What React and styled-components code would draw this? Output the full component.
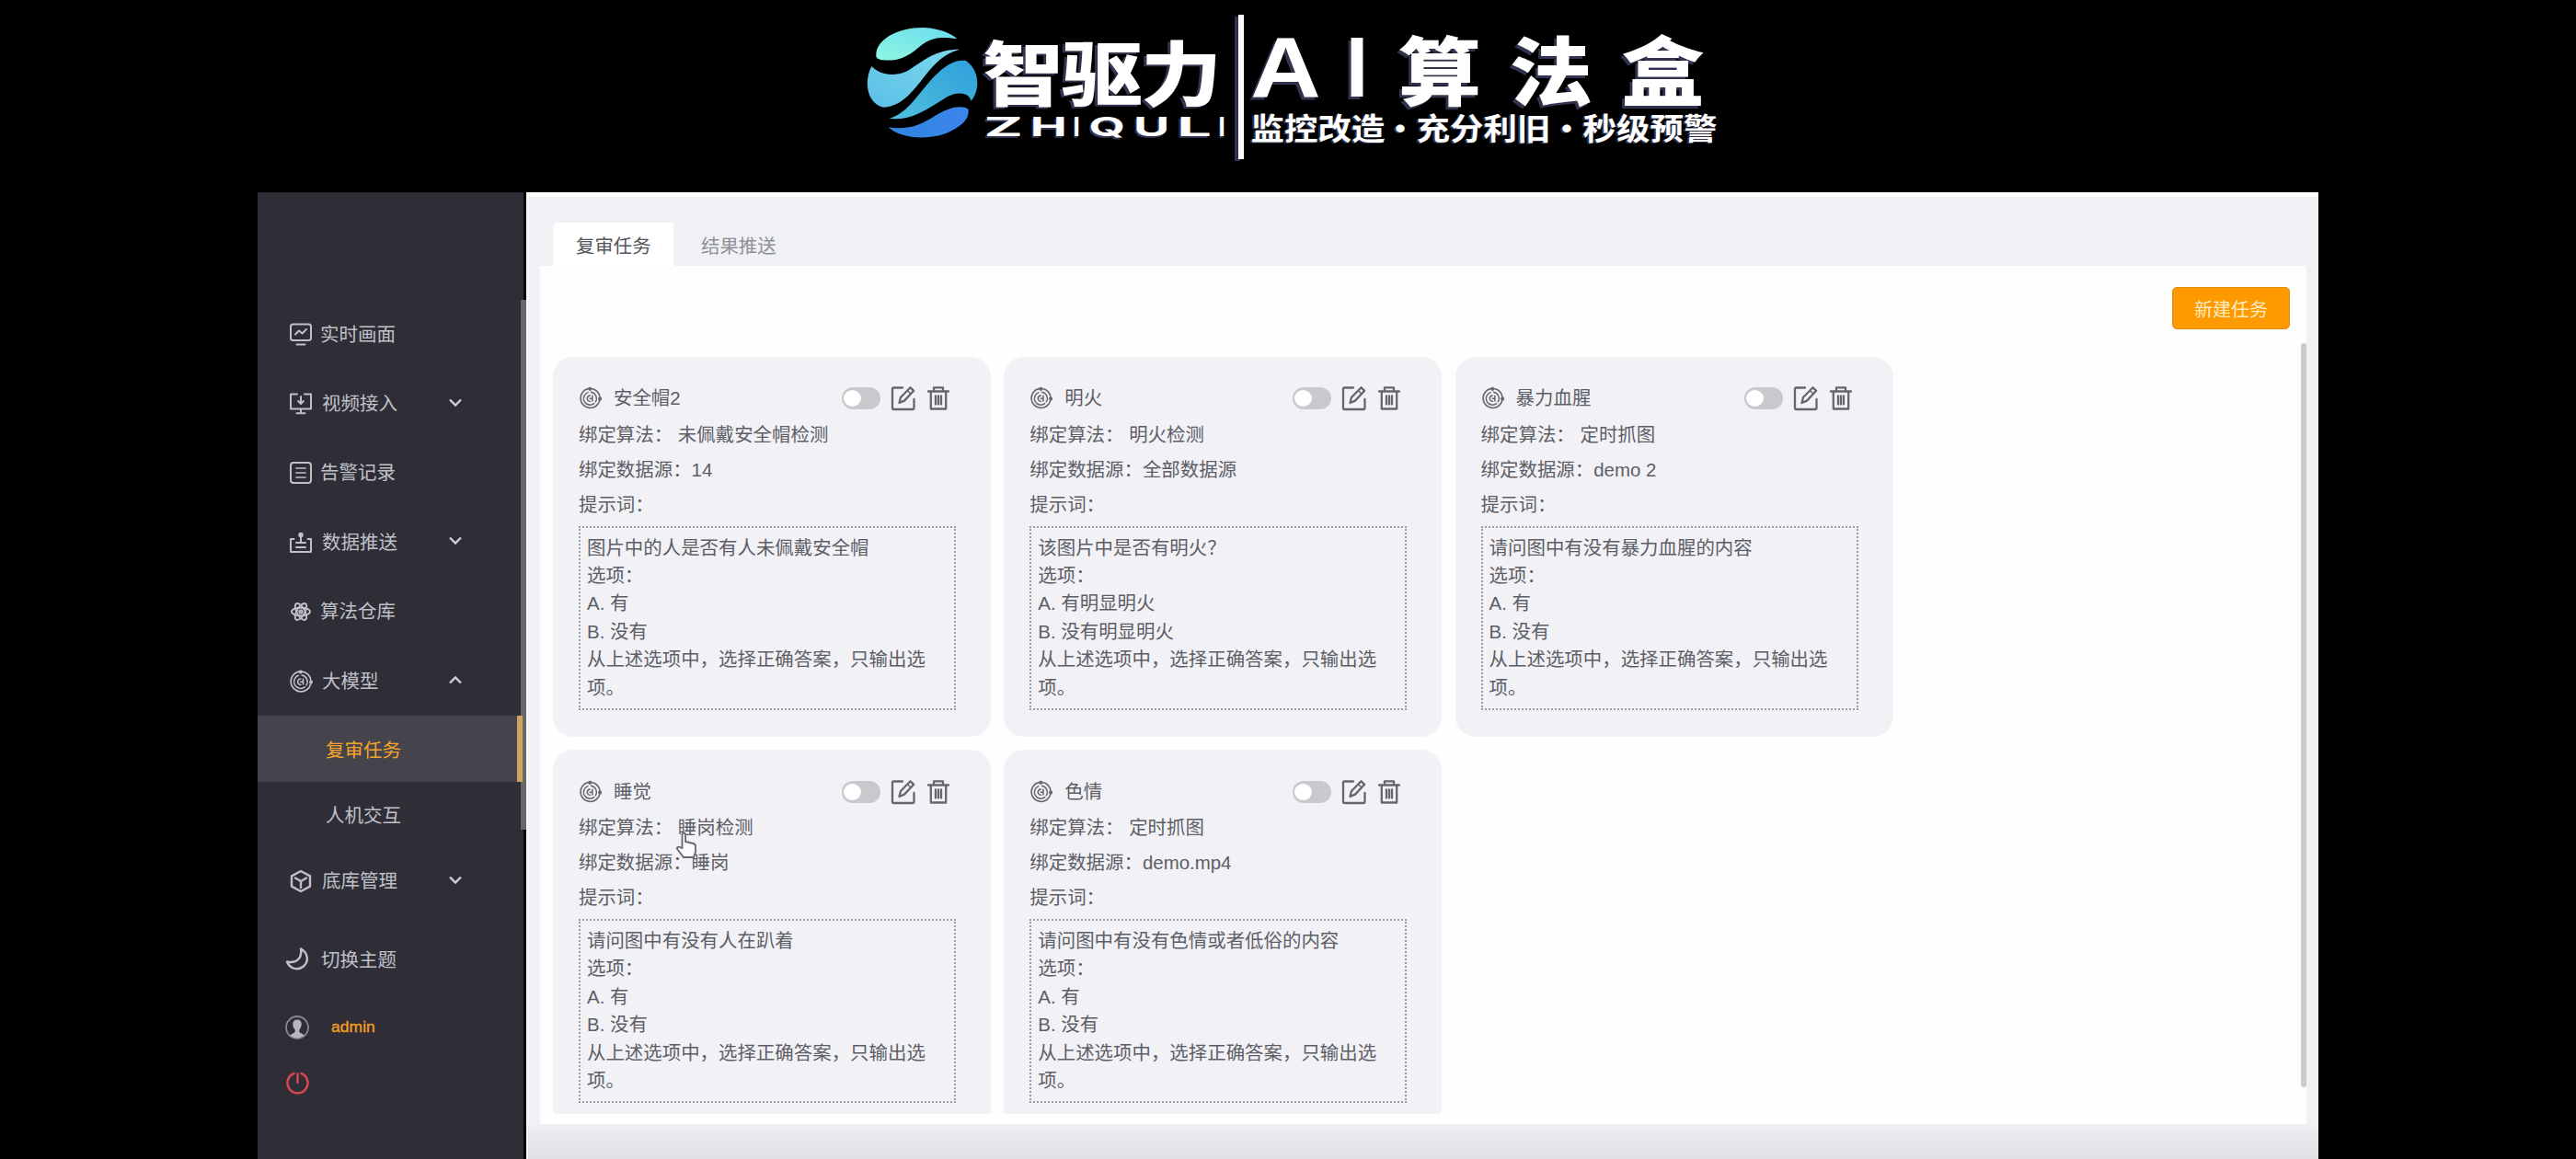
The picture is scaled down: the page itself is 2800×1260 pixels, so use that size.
import React from "react";
import styled, { createGlobalStyle } from "styled-components";

const Global = createGlobalStyle`
  * { box-sizing: border-box; }
  body {
    margin: 0;
    background: #000;
    font-family: "Liberation Sans", "Noto Sans CJK SC", sans-serif;
  }
`;

/* ---------- frame ---------- */

const Stage = styled.div`
  width: 2800px;
  height: 1260px;
  background: #000;
  overflow: hidden;
  display: flex;
  flex-direction: column;
`;

const Banner = styled.header`
  height: 209px;
  flex: none;
  display: flex;
  align-items: flex-start;
  padding-left: 941px;
  color: #fff;
`;

const LogoMark = styled.svg`
  width: 124px;
  height: 125px;
  margin-top: 28px;
  flex: none;
`;

const Brand = styled.div`
  width: 281px;
  padding-top: 38px;
  flex: none;
`;

const GlyphRow = styled.div`
  display: flex;
  align-items: center;
  height: ${(p) => p.$h}px;
  padding-left: ${(p) => p.$indent || 0}px;
`;

const Slot = styled.span`
  flex: none;
  width: ${(p) => p.$w}px;
  display: flex;
  justify-content: center;
`;

const Glyph = styled.span`
  display: block;
  white-space: nowrap;
  line-height: 1;
  font-family: ${(p) => p.$font || '"Noto Sans CJK SC", sans-serif'};
  font-size: ${(p) => p.$size}px;
  font-weight: ${(p) => p.$weight || 900};
  text-shadow: ${(p) => p.$shadow || "-3px 3px 0 #30344e"};
  transform: scale(${(p) => p.$sx || 1}, ${(p) => p.$sy || 1});
`;

const Divider = styled.div`
  width: 6px;
  height: 157px;
  margin-top: 16px;
  flex: none;
  background: #fff;
  box-shadow: -4px 2px 0 #30344e;
`;

const Slogan = styled.div`
  padding: 34px 0 0 8px;
`;

const Frame = styled.div`
  height: 1051px;
  margin: 0 280px;
  display: flex;
`;

/* ---------- sidebar ---------- */

const Sidebar = styled.aside`
  width: 292px;
  flex: none;
  display: flex;
  flex-direction: column;
  background: #2f2e37;
  border-right: 3px solid #050508;
  padding-top: 117px;
`;

const MenuArea = styled.div`
  height: 672px;
  margin-right: -3px;
  display: flex;
  justify-content: space-between;
`;

const MenuList = styled.nav`
  width: 288px;
  flex: none;
`;

const MenuScroll = styled.div`
  width: 6px;
  height: 576px;
  margin-left: -8px;
  background: #68686a;
`;

const MenuItem = styled.div`
  height: 75.4px;
  display: flex;
  align-items: center;
  padding: 0 65px 0 34px;
  font-size: 20.5px;
  color: #bfc0c8;
`;

const MenuIcon = styled.svg`
  width: 26px;
  height: 26px;
  flex: none;
  fill: none;
  stroke: #bfc0c8;
  stroke-width: 2;
  stroke-linecap: round;
  stroke-linejoin: round;
`;

const MenuLabel = styled.span`
  flex: 1;
  padding-left: ${(p) => (p.$wide ? 10 : 8)}px;
  line-height: 30px;
`;

const Chevron = styled.svg`
  width: 16px;
  height: 12px;
  fill: none;
  stroke: #cfd0d6;
  stroke-width: 2.4;
  margin-top: -3px;
  transform: ${(p) => (p.$up ? "rotate(180deg)" : "none")};
`;

const SubItem = styled.div`
  height: 71.2px;
  width: ${(p) => (p.$active ? 288 : 282)}px;
  display: flex;
  align-items: center;
  padding-left: 74px;
  font-size: 20.5px;
  position: relative;
  z-index: 1;
  color: ${(p) => (p.$active ? "#f5a42a" : "#bfc0c8")};
  background: ${(p) => (p.$active ? "#45444c" : "transparent")};
  border-right: ${(p) => (p.$active ? "6px solid #d3a262" : "none")};
`;

const FooterRow = styled.div`
  height: ${(p) => p.$h}px;
  display: flex;
  align-items: center;
  padding-left: 30px;
  font-size: 20.5px;
  color: #bfc0c8;
`;

const UserName = styled.span`
  padding-left: 24px;
  font-size: 17.4px;
  letter-spacing: 0.1px;
  font-weight: 400;
  color: #f39c22;
  -webkit-text-stroke: 0.4px #f39c22;
`;

const ThemeLabel = styled.span`
  padding-left: 13px;
`;

/* ---------- content ---------- */

const Content = styled.main`
  flex: 1;
  min-width: 0;
  display: flex;
  flex-direction: column;
  background: linear-gradient(#f0f1f5 0, #f0f1f5 1008px, #ebecef 1013px, #dfe0e4 1051px);
  border-top: 5px solid #fdfdfe;
  border-left: 2px solid #f8f8fb;
  padding: 28px 13px 38px 13px;
`;

const Tabs = styled.div`
  display: flex;
  height: 47px;
  flex: none;
  padding-left: 14px;
`;

const Tab = styled.div`
  width: ${(p) => (p.$active ? 131 : 142)}px;
  display: flex;
  align-items: center;
  padding: 0 0 0 ${(p) => (p.$active ? 25 : 30)}px;
  font-size: 20.4px;
  white-space: nowrap;
  color: ${(p) => (p.$active ? "#55555b" : "#8f8f96")};
  background: ${(p) => (p.$active ? "#fff" : "transparent")};
  border-radius: 4px 4px 0 0;
`;

const Panel = styled.section`
  flex: 1;
  min-height: 0;
  background: #fefefe;
  display: flex;
  flex-direction: column;
  padding: 23px 0 11px 14px;
`;

const Toolbar = styled.div`
  height: 61px;
  flex: none;
  display: flex;
  justify-content: flex-end;
  padding-right: 18px;
`;

const CreateButton = styled.button`
  width: 128px;
  height: 46px;
  border: 1px solid #e08e12;
  border-radius: 5px;
  background: #fe9900;
  color: #ffedc4;
  font-family: inherit;
  font-size: 20px;
  padding: 0;
`;

const ScrollBody = styled.div`
  flex: 1;
  min-height: 0;
  display: flex;
  justify-content: space-between;
`;

const CardGrid = styled.div`
  display: grid;
  grid-template-columns: repeat(3, 476px);
  grid-auto-rows: 413px;
  column-gap: 14.3px;
  row-gap: 14.5px;
  margin-top: 14.5px;
  height: 823.5px;
  overflow: hidden;
`;

const Scrollbar = styled.div`
  width: 6px;
  height: 809px;
  border-radius: 3px;
  background: #cbcacc;
`;

const CardBox = styled.article`
  position: relative;
  background: #f1f1f6;
  border-radius: 22px;
  padding: 25px 38px 0 28px;
  color: #5d5e66;
  font-size: 20.45px;
`;

const CardHead = styled.div`
  display: flex;
  align-items: center;
  height: 41px;
  padding-right: 6px;
`;

const CardTitle = styled.span`
  flex: 1;
  padding-left: 13px;
  line-height: 30px;
`;

const ToggleTrack = styled.span`
  width: 42px;
  height: 24px;
  border-radius: 12px;
  background: #c9c9cd;
  padding: 3px 2px;
  margin-right: 11px;
`;

const Knob = styled.span`
  display: block;
  width: 19px;
  height: 18px;
  border-radius: 50%;
  background: #fff;
`;

const ActionIcon = styled.svg`
  width: ${(p) => p.$w || 28}px;
  height: 28px;
  margin-right: ${(p) => p.$gap || 0}px;
  flex: none;
  fill: none;
  stroke: #66666d;
  stroke-width: 2.3;
  stroke-linecap: round;
  stroke-linejoin: round;
`;

const Field = styled.div`
  height: 38px;
  line-height: 38px;
  white-space: pre;
`;

const Prompt = styled.div`
  width: 410px;
  height: 200px;
  margin-top: 4px;
  padding: 7px;
  border: 2px dotted #9b9ba2;
  line-height: 30.4px;
  white-space: pre-wrap;
`;

const Pointer = styled.svg`
  position: absolute;
  left: 133px;
  top: 89px;
  width: 24px;
  height: 30px;
`;

/* ---------- drawings ---------- */

const Radar = ({ as: As = MenuIcon, ...rest }) => (
  <As viewBox="0 0 26 26" {...rest}>
    <path d="M10.5 2.2A11 11 0 1 0 23.8 15.5" strokeWidth="1.7" />
    <path d="M14.5 2.1A11 11 0 0 1 24 12" strokeWidth="1.7" />
    <path d="M10.4 6.3A7.3 7.3 0 1 0 17.4 18.9" strokeWidth="1.5" />
    <path d="M14 5.9A7.3 7.3 0 0 1 19 17" strokeWidth="1.5" />
    <path d="M12.7 10A3.2 3.2 0 1 0 13 16.4M12.7 13.2H15M15.5 10.2V16" strokeWidth="1.6" />
    <circle cx="12.7" cy="2.4" r="1" />
    <circle cx="24" cy="13.5" r="1" />
  </As>
);

const icons = {
  monitor: (
    <MenuIcon viewBox="0 0 26 26">
      <rect x="2" y="1.6" width="22" height="17.5" rx="2.5" />
      <path d="M7 12.5l4-4 3.5 3 4.5-4.5M8.5 23.4h9" />
    </MenuIcon>
  ),
  input: (
    <MenuIcon viewBox="0 0 26 26">
      <path d="M9 2.4H2V18.5H24V2.4H17M13 5v7M10.2 10l2.8 3 2.8-3M13 18.5v4M8.5 23.2h9" />
    </MenuIcon>
  ),
  list: (
    <MenuIcon viewBox="0 0 26 26">
      <rect x="2" y="2" width="22" height="22" rx="3" />
      <path d="M8 8h10M8 13h10M8 18h10" strokeWidth="1.7" />
    </MenuIcon>
  ),
  push: (
    <MenuIcon viewBox="0 0 26 26">
      <path d="M5.5 9H2V23H24V9h-3.5M13 12V4M8 13h10M8 18h10" />
      <circle cx="13" cy="4.6" r="1.8" />
    </MenuIcon>
  ),
  flower: (
    <MenuIcon viewBox="0 0 26 26">
      {[0, 60, 120].map((a) => (
        <ellipse key={a} cx="13" cy="13" rx="10" ry="4.3" transform={`rotate(${a} 13 13)`} strokeWidth="1.9" />
      ))}
      <circle cx="13" cy="13" r="1.6" />
    </MenuIcon>
  ),
  radar: <Radar />,
  cube: (
    <MenuIcon viewBox="0 0 26 26">
      <path d="M13 2l10 5.4v11.2L13 24 3 18.600V7.400z" strokeWidth="2.4" />
      <path d="M7 9.500l6 3.500 6-3.500M13 13v7" strokeWidth="2.4" />
    </MenuIcon>
  ),
};

const EditIcon = () => (
  <ActionIcon viewBox="0 0 28 28" $gap={11}>
    <path d="M13 2.500H3.500a1.500 1.500 0 0 0-1.500 1.500V24.500A1.500 1.500 0 0 0 3.500 26H24a1.500 1.500 0 0 0 1.500-1.500V15" />
    <path d="M9.500 19l1.500-6L21.500 2.300l3.700 3.500L15 16.600z" />
    <path d="M18.500 5.800l3.400 3.200" strokeWidth="1.5" />
  </ActionIcon>
);

const TrashIcon = () => (
  <ActionIcon viewBox="0 0 26 28" $w={26}>
    <path d="M2 6.500H24M8 6V2.300H18V6M4.800 7V25.500H21.200V7M10 11.500v9M13 11.500v9M16 11.500v9" />
  </ActionIcon>
);

const Logo = () => (
  <LogoMark viewBox="18 54 372 375">
    <defs>
      <linearGradient id="mint" x1="0" y1="1" x2="1" y2="0">
        <stop offset="0" stopColor="#8ff6e2" />
        <stop offset="1" stopColor="#6adcee" />
      </linearGradient>
      <linearGradient id="sky" x1="0" y1="1" x2="1" y2="0">
        <stop offset="0" stopColor="#5bbfe6" />
        <stop offset="1" stopColor="#7cd8ee" />
      </linearGradient>
      <linearGradient id="azure" x1="0" y1="1" x2="1" y2="0">
        <stop offset="0" stopColor="#4fc0dc" />
        <stop offset="1" stopColor="#2f9fdc" />
      </linearGradient>
      <linearGradient id="deep" x1="0" y1="0" x2="1" y2="0">
        <stop offset="0" stopColor="#2f86dd" />
        <stop offset="1" stopColor="#3c84ec" />
      </linearGradient>
    </defs>
    <path fill="url(#mint)" d="M52 152C50 100 120 60 205 60C260 62 300 80 316 97C250 88 225 95 190 125C150 160 115 170 75 166C60 164 52 160 52 152Z" />
    <path fill="url(#sky)" d="M38 186C60 212 105 222 150 203C200 175 240 130 325 131C270 146 240 180 205 225C160 285 125 318 75 320C35 310 20 270 24 230C26 210 32 195 38 186Z" />
    <path fill="url(#azure)" d="M95 357C150 340 180 290 215 250C255 200 300 160 345 168C375 190 385 220 381 255C375 285 366 292 362 300C355 272 320 268 285 285C220 325 170 365 95 357Z" />
    <path fill="url(#deep)" d="M92 385C160 395 200 375 240 350C290 318 330 312 352 325C358 350 340 375 300 395C240 430 130 425 92 385Z" />
  </LogoMark>
);

/* ---------- data ---------- */

const menu = [
  { label: "实时画面", icon: "monitor" },
  { label: "视频接入", icon: "input", arrow: "down" },
  { label: "告警记录", icon: "list" },
  { label: "数据推送", icon: "push", arrow: "down" },
  { label: "算法仓库", icon: "flower" },
  { label: "大模型", icon: "radar", arrow: "up", children: ["复审任务", "人机交互"] },
  { label: "底库管理", icon: "cube", arrow: "down" },
];

const tail = "从上述选项中，选择正确答案，只输出选项。";
const yesNo = ["A. 有", "B. 没有"];

const tasks = [
  { name: "安全帽2", algo: "未佩戴安全帽检测", source: "14", ask: "图片中的人是否有人未佩戴安全帽", opts: yesNo },
  { name: "明火", algo: "明火检测", source: "全部数据源", ask: "该图片中是否有明火？", opts: ["A. 有明显明火", "B. 没有明显明火"] },
  { name: "暴力血腥", algo: "定时抓图", source: "demo 2", ask: "请问图中有没有暴力血腥的内容", opts: yesNo },
  { name: "睡觉", algo: "睡岗检测", source: "睡岗", ask: "请问图中有没有人在趴着", opts: yesNo, pointer: true },
  { name: "色情", algo: "定时抓图", source: "demo.mp4", ask: "请问图中有没有色情或者低俗的内容", opts: yesNo },
];

const latin = [
  ["Z", 51, 2.2],
  ["H", 48, 1.85],
  ["I", 13, 0.9],
  ["Q", 52, 1.75],
  ["U", 46, 1.85],
  ["L", 47, 2.3],
  ["I", 12, 0.9],
];

const headline = [
  ["A", 75, 1.14],
  ["I", 79, 0.95],
  ["算", 102, 1],
  ["法", 140, 1],
  ["盒", 103, 1],
];

/* ---------- parts ---------- */

function TaskCard({ task }) {
  return (
    <CardBox>
      <CardHead>
        <Radar as={ActionIcon} $w={25} />
        <CardTitle>{task.name}</CardTitle>
        <ToggleTrack>
          <Knob />
        </ToggleTrack>
        <EditIcon />
        <TrashIcon />
      </CardHead>
      <Field>{"绑定算法： " + task.algo}</Field>
      <Field>{"绑定数据源：" + task.source}</Field>
      <Field>提示词：</Field>
      <Prompt>{[task.ask, "选项：", ...task.opts, tail].join("\n")}</Prompt>
      {task.pointer && (
        <Pointer viewBox="0 0 24 30">
          <path
            d="M7.500 18V3.500c0-2.600 3.600-2.600 3.600 0V11l8.400 2c1.700.4 2.500 1.500 2.500 3.200V22l-2 6H9L2.500 19.500c-1.500-2.200 1-3.800 2.800-2.300z"
            fill="#fbfbfd"
            stroke="#66666e"
            strokeWidth="1.8"
          />
        </Pointer>
      )}
    </CardBox>
  );
}

export default function App() {
  return (
    <Stage>
      <Global />
      <Banner>
        <Logo />
        <Brand>
          <GlyphRow $h={76} $indent={4}>
            {["智", "驱", "力"].map((c) => (
              <Slot key={c} $w={86}>
                <Glyph $size={86} $sx={1.02} $sy={0.88}>{c}</Glyph>
              </Slot>
            ))}
          </GlyphRow>
          <GlyphRow $h={46}>
            {latin.map(([c, w, sx], i) => (
              <Slot key={i} $w={w}>
                <Glyph $size={29} $weight={700} $sx={sx} $font="Inter, sans-serif" $shadow="-1px 2px 0 #30344e">{c}</Glyph>
              </Slot>
            ))}
          </GlyphRow>
        </Brand>
        <Divider />
        <Slogan>
          <GlyphRow $h={78}>
            {headline.map(([c, w, sx]) => (
              <Slot key={c} $w={w}>
                <Glyph $size={c < "a" ? 93 : 90} $weight={c < "a" ? 700 : 900} $sx={sx} $sy={c < "a" ? 1 : 0.9} $font={c < "a" ? '"Liberation Sans", sans-serif' : undefined}>{c}</Glyph>
              </Slot>
            ))}
          </GlyphRow>
          <GlyphRow $h={52}>
            {["监控改造", "·", "充分利旧", "·", "秒级预警"].map((t, i) => (
              <Slot key={i} $w={t === "·" ? 34 : i === 0 ? 145 : 147}>
                <Glyph $size={36.500} $weight={700} $sy={0.9} $shadow="-2px 2px 0 #30344e">{t}</Glyph>
              </Slot>
            ))}
          </GlyphRow>
        </Slogan>
      </Banner>

      <Frame>
        <Sidebar>
          <MenuArea>
            <MenuList>
              {menu.map((m) => (
                <React.Fragment key={m.label}>
                  <MenuItem>
                    {icons[m.icon]}
                    <MenuLabel $wide={!!m.arrow}>{m.label}</MenuLabel>
                    {m.arrow && (
                      <Chevron viewBox="0 0 16 12" $up={m.arrow === "up"}>
                        <path d="M2 2.500l6 6 6-6" />
                      </Chevron>
                    )}
                  </MenuItem>
                  {(m.children || []).map((c, i) => (
                    <SubItem key={c} $active={i === 0}>{c}</SubItem>
                  ))}
                </React.Fragment>
              ))}
            </MenuList>
            <MenuScroll />
          </MenuArea>
          <FooterRow $h={88}>
            <MenuIcon viewBox="0 0 26 26">
              <path d="M17 2.500C25 7 26 16 20 21.500C14 26.500 5 24.500 2 16.500C13 19 18.500 12 17 2.500Z" strokeWidth="2.4" />
            </MenuIcon>
            <ThemeLabel>切换主题</ThemeLabel>
          </FooterRow>
          <FooterRow $h={61}>
            <MenuIcon viewBox="0 0 26 26">
              <circle cx="13" cy="13" r="12" stroke="#85868f" strokeWidth="1.8" />
              <path d="M13 4.500c-3.500 0-5 2.500-4.700 5.500.2 2.500 1.200 4.500 2.400 5.500v2.500L5 21.500Q13 27.500 21 21.500L15.300 18v-2.500c1.200-1 2.200-3 2.400-5.500.3-3-1.200-5.500-4.700-5.500z" fill="#b5b6be" stroke="none" />
            </MenuIcon>
            <UserName>admin</UserName>
          </FooterRow>
          <FooterRow $h={59}>
            <MenuIcon viewBox="0 0 26 26">
              <path d="M9.500 3A11 11 0 1 0 17.500 3M13.500 3.500V13" stroke="#d9474f" strokeWidth="2.5" />
            </MenuIcon>
          </FooterRow>
        </Sidebar>

        <Content>
          <Tabs>
            <Tab $active>复审任务</Tab>
            <Tab>结果推送</Tab>
          </Tabs>
          <Panel>
            <Toolbar>
              <CreateButton>新建任务</CreateButton>
            </Toolbar>
            <ScrollBody>
              <CardGrid>
                {tasks.map((t) => (
                  <TaskCard key={t.name} task={t} />
                ))}
              </CardGrid>
              <Scrollbar />
            </ScrollBody>
          </Panel>
        </Content>
      </Frame>
    </Stage>
  );
}
